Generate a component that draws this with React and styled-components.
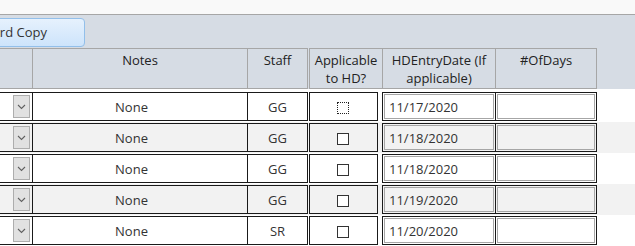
import React from "react";
import styled, { createGlobalStyle } from "styled-components";

const Global = createGlobalStyle`
  html, body { margin: 0; padding: 0; background: #ffffff; overflow: hidden; }
  body { font-family: "Open Sans", "Liberation Sans", sans-serif; }
  #root { width: 635px; height: 246px; overflow: hidden; }
`;

const Page = styled.div`
  width: 635px;
  height: 246px;
  display: flex;
  flex-direction: column;
  overflow: hidden;
`;

const TopStrip = styled.div`
  height: 14px;
  background: #f9f9f9;
  border-bottom: 1px solid #a6a6a6;
  flex: none;
`;

const HeaderPanel = styled.div`
  background: #d6dce4;
  display: flex;
  flex-direction: column;
  padding-top: 3px;
  flex: none;
`;

const ButtonBar = styled.div`
  display: flex;
  height: 30px;
`;

const CmdButton = styled.button`
  box-sizing: border-box;
  width: 140px;
  height: 29px;
  margin-left: -55px;
  padding: 0 37px 1px 0;
  display: flex;
  align-items: center;
  justify-content: flex-end;
  border: 1px solid #92bfea;
  border-radius: 4px;
  background: linear-gradient(#e6f1fd, #cde4fb);
  font-family: inherit;
  font-size: 13px;
  color: #333333;
  white-space: nowrap;
`;

const HeadRow = styled.div`
  display: flex;
  height: 41px;
`;

const HeadCell = styled.div`
  box-sizing: border-box;
  width: ${(p) => p.w}px;
  margin-left: ${(p) => p.ml || 0}px;
  height: 41px;
  border: 1px solid #a6a6a6;
  border-left: ${(p) => (p.noLeft ? "none" : "1px solid #a6a6a6")};
  padding-top: 2px;
  text-align: center;
  font-size: 13px;
  line-height: 18px;
  color: #222222;
  flex: none;
`;

const Gap = styled.div`
  height: 2px;
  flex: none;
`;

const Row = styled.div`
  display: flex;
  align-items: center;
  height: 31px;
  flex: none;
  background: ${(p) => (p.alt ? "#f2f2f2" : "#ffffff")};
`;

const Group = styled.div`
  box-sizing: border-box;
  display: flex;
  height: 29px;
  margin-left: ${(p) => p.ml || 0}px;
  border: 1px solid #1a1a1a;
  flex: none;
`;

const Cell = styled.div`
  box-sizing: border-box;
  width: ${(p) => p.w}px;
  height: 100%;
  display: flex;
  align-items: center;
  justify-content: ${(p) => p.justify || "center"};
  padding-right: ${(p) => p.pr || 0}px;
  border-left: ${(p) => (p.divider ? "1px solid #1a1a1a" : "none")};
  font-size: 13px;
  color: #333333;
  flex: none;
`;

const FieldCell = styled.div`
  box-sizing: border-box;
  width: ${(p) => p.w}px;
  height: 100%;
  display: flex;
  align-items: stretch;
  border-left: ${(p) => (p.divider ? "1px solid #1a1a1a" : "none")};
  flex: none;
`;

const DropButton = styled.div`
  box-sizing: border-box;
  width: 17px;
  height: 23px;
  margin-left: 13px;
  border: 1px solid #adadad;
  background: #e1e1e1;
  display: flex;
  align-items: center;
  justify-content: center;
`;

const Inner = styled.div`
  box-sizing: border-box;
  flex: 1;
  margin: 1px;
  border: 1px solid #a6a6a6;
  display: flex;
  align-items: center;
  padding-left: 4px;
  font-size: 13px;
  color: #333333;
`;

const CheckBox = styled.div`
  box-sizing: border-box;
  width: 12px;
  height: 12px;
  margin-top: 3px;
  margin-right: 1px;
  border: ${(p) => (p.focus ? "1.5px dotted #222" : "1.5px solid #333")};
  background: #ffffff;
`;

const Chevron = () => (
  <svg width="9" height="6" viewBox="0 0 9 6">
    <path d="M1 1 L4.5 4.5 L8 1" fill="none" stroke="#606060" strokeWidth="1.1" />
  </svg>
);

const rows = [
  { staff: "GG", date: "11/17/2020", focus: true },
  { staff: "GG", date: "11/18/2020" },
  { staff: "GG", date: "11/18/2020" },
  { staff: "GG", date: "11/19/2020" },
  { staff: "SR", date: "11/20/2020" },
];

export default function App() {
  return (
    <Page>
      <Global />
      <TopStrip />
      <HeaderPanel>
        <ButtonBar>
          <CmdButton>Hard Copy</CmdButton>
        </ButtonBar>
        <HeadRow>
          <HeadCell w={34} ml={-1} />
          <HeadCell w={215} noLeft>Notes</HeadCell>
          <HeadCell w={60} noLeft>Staff</HeadCell>
          <HeadCell w={74} ml={1}>Applicable<br />to HD?</HeadCell>
          <HeadCell w={113} noLeft>HDEntryDate (If<br />applicable)</HeadCell>
          <HeadCell w={101} noLeft>#OfDays</HeadCell>
        </HeadRow>
      </HeaderPanel>
      <Gap />
      {rows.map((r, i) => (
        <Row key={i} alt={i % 2 === 1}>
          <Group ml={-1}>
            <Cell w={32} justify="flex-start">
              <DropButton><Chevron /></DropButton>
            </Cell>
            <Cell w={215} divider pr={17}>None</Cell>
            <Cell w={60} divider>{r.staff}</Cell>
          </Group>
          <Group ml={1}>
            <Cell w={67}>
              <CheckBox focus={r.focus} />
            </Cell>
          </Group>
          <Group ml={4}>
            <FieldCell w={112}>
              <Inner>{r.date}</Inner>
            </FieldCell>
            <FieldCell w={101} divider>
              <Inner />
            </FieldCell>
          </Group>
        </Row>
      ))}
    </Page>
  );
}
